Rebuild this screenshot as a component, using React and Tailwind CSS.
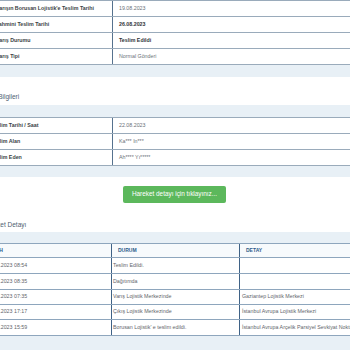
import React from 'react'

const infoRows = [
  { label: "Varışın Borusan Lojistik'e Teslim Tarihi", value: '19.08.2023' },
  { label: 'Tahmini Teslim Tarihi', value: '26.08.2023', bold: true },
  { label: 'Varış Durumu', value: 'Teslim Edildi', bold: true },
  { label: 'Varış Tipi', value: 'Normal Gönderi' },
]

const deliveryRows = [
  { label: 'Teslim Tarihi / Saat', value: '22.08.2023' },
  { label: 'Teslim Alan', value: 'Ka*** In***' },
  { label: 'Teslim Eden', value: 'Ah**** Yı*****' },
]

const moves = [
  { date: '26.08.2023 08:54', status: 'Teslim Edildi.', detail: '', h: 'h-4' },
  { date: '26.08.2023 08:35', status: 'Dağıtımda', detail: '', h: 'h-4' },
  { date: '26.08.2023 07:35', status: 'Varış Lojistik Merkezinde', detail: 'Gaziantep Lojistik Merkezi', h: 'h-[15px]' },
  { date: '25.08.2023 17:17', status: 'Çıkış Lojistik Merkezinde', detail: 'İstanbul Avrupa Lojistik Merkezi', h: 'h-[15px]' },
  { date: '19.08.2023 15:59', status: "Borusan Lojistik' e teslim edildi.", detail: 'İstanbul Avrupa Arçelik Parsiyel Sevkiyat Noktası', h: 'h-4' },
]

function InfoRow({ label, value, bold, indent }) {
  return (
    <div className="flex h-4 border-b border-[#9aabbb] bg-white">
      <div className={`w-[128px] shrink-0 flex items-center font-bold text-[#3a3f45] whitespace-nowrap ${indent}`}>
        {label}
      </div>
      <div className={`flex-1 flex items-center border-l border-[#56728e] pl-[6px] whitespace-nowrap ${bold ? 'font-bold text-[#2f3338]' : 'text-[#6b7178]'}`}>
        {value}
      </div>
    </div>
  )
}

export default function App() {
  return (
    <div className="w-[350px] h-[350px] overflow-hidden bg-white font-['Liberation_Sans',Arial,sans-serif] text-[5.3px] leading-none">
      <div className="ml-[-16px] w-[420px]">
        {/* Gönderi bilgileri */}
        <div className="border-t border-[#9aabbb]">
          {infoRows.map((r) => (
            <InfoRow key={r.label} {...r} indent="pl-[12px]" />
          ))}
        </div>
        <div className="h-[12px] bg-[#e8f0f6]" />

        {/* Teslim bilgileri */}
        <div className="mt-[16px] mb-[4px] ml-[-6px] h-[8px] flex items-center text-[6.5px] text-[#4d5e70]">
          Teslim Bilgileri
        </div>
        <div className="h-[12px] bg-[#e8f0f6]" />
        <div className="border-t border-[#9aabbb]">
          {deliveryRows.map((r) => (
            <InfoRow key={r.label} {...r} indent="pl-[7px]" />
          ))}
        </div>
        <div className="h-[11px] bg-[#e8f0f6]" />

        {/* Button */}
        <div className="mt-[9px] flex w-[381px] justify-center">
          <button className="h-[17px] w-[103px] rounded-[2px] bg-[#5cb85c] text-[6.4px] text-white">
            Hareket detayı için tıklayınız...
          </button>
        </div>

        {/* Hareket detayı */}
        <div className="mt-[18px] ml-[-1px] h-[8px] flex items-center text-[6.5px] text-[#4d5e70]">
          Hareket Detayı
        </div>
        <div className="mt-[3px] h-[11px] bg-[#e8f0f6]" />
        <div className="border-t border-[#8ea6bd]">
          <div className="flex h-[14px] border-b border-[#8ea6bd] bg-[#f7fafc] text-[5px] font-bold text-[#2d5b8b]">
            <div className="w-[127px] shrink-0 flex items-center pl-[4px]">TARİH</div>
            <div className="w-[128px] shrink-0 flex items-center border-l border-[#3f6286] pl-[6px]">DURUM</div>
            <div className="flex-1 flex items-center border-l border-[#3f6286] pl-[6px]">DETAY</div>
          </div>
          {moves.map((m) => (
            <div key={m.date + m.status} className={`flex ${m.h} border-b border-[#8ea6bd] bg-white text-[#5f656b] whitespace-nowrap`}>
              <div className="w-[127px] shrink-0 flex items-center pl-[2px]">{m.date}</div>
              <div className="w-[128px] shrink-0 flex items-center border-l border-[#3f6286] pl-[1px]">{m.status}</div>
              <div className="flex-1 flex items-center border-l border-[#3f6286] pl-[2px] overflow-hidden">{m.detail}</div>
            </div>
          ))}
        </div>
        <div className="h-[15px] bg-[#e8f0f6]" />
      </div>
    </div>
  )
}
